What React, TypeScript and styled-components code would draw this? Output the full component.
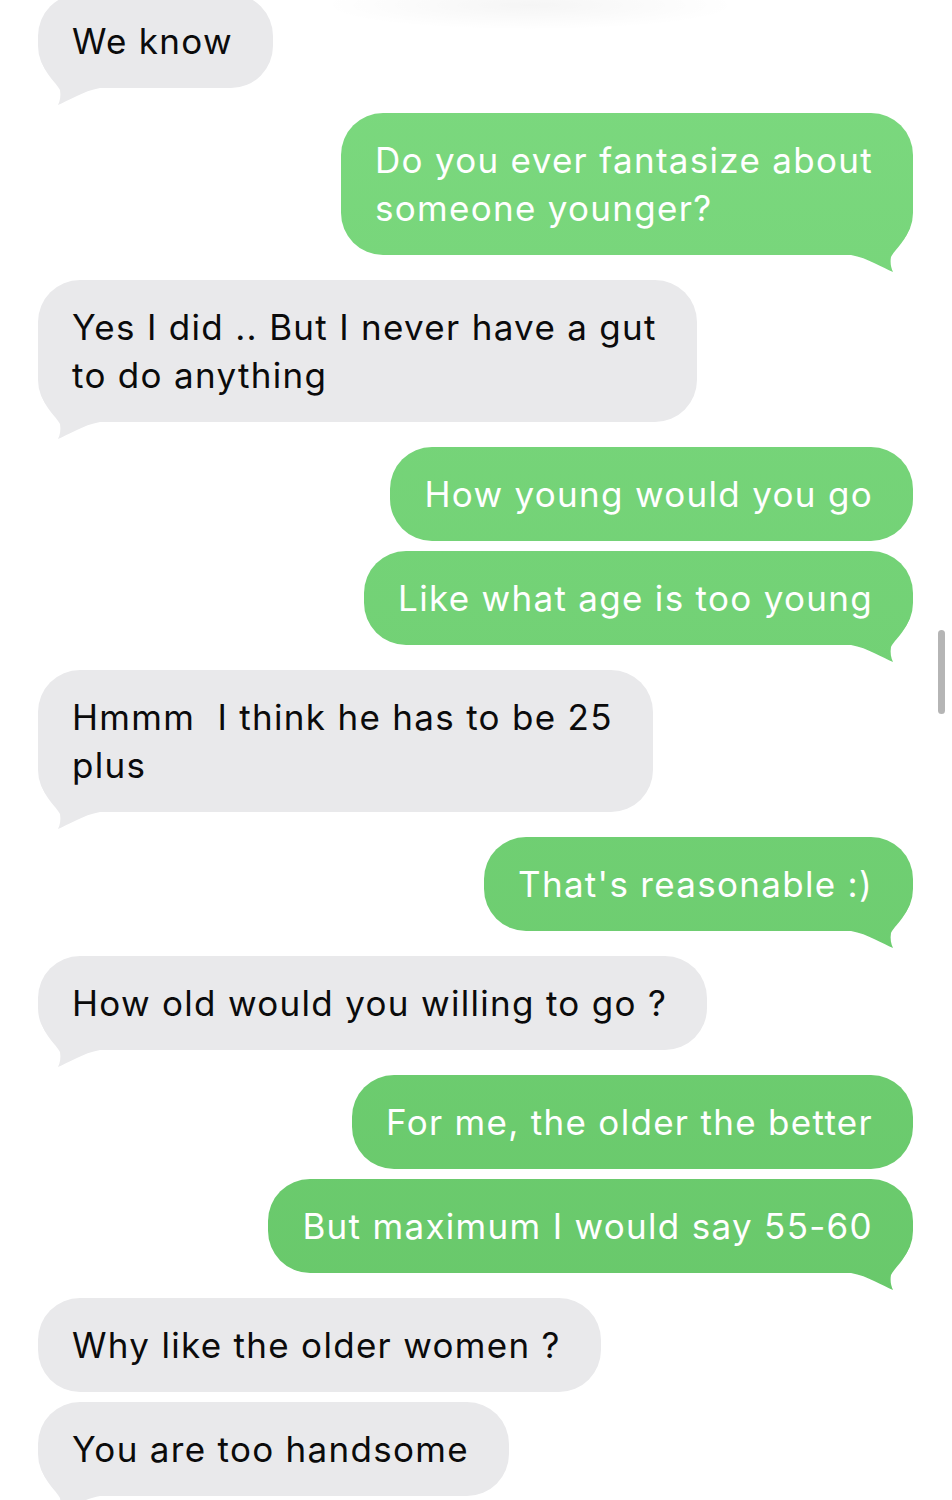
import React from 'react';
import styled, { createGlobalStyle, css } from 'styled-components';

type Side = 'them' | 'me';

interface MessageGroup {
  side: Side;
  texts: string[];
}

// line breaks are kept as they wrap on the phone
const thread: MessageGroup[] = [
  { side: 'them', texts: ['We know'] },
  { side: 'me', texts: ['Do you ever fantasize about\nsomeone younger?'] },
  { side: 'them', texts: ['Yes I did .. But I never have a gut\nto do anything'] },
  { side: 'me', texts: ['How young would you go', 'Like what age is too young'] },
  { side: 'them', texts: ['Hmmm  I think he has to be 25\nplus'] },
  { side: 'me', texts: ["That's reasonable :)"] },
  { side: 'them', texts: ['How old would you willing to go ?'] },
  { side: 'me', texts: ['For me, the older the better', 'But maximum I would say 55-60'] },
  { side: 'them', texts: ['Why like the older women ?', 'You are too handsome'] },
];

const GlobalStyle = createGlobalStyle`
  html, body {
    margin: 0;
    padding: 0;
    background: #ffffff;
  }
  body {
    font-family: Inter, Roboto, 'Liberation Sans', sans-serif;
    -webkit-font-smoothing: antialiased;
    overflow: hidden;
  }
`;

const Screen = styled.div`
  position: relative;
  width: 952px;
  height: 1500px;
  overflow: hidden;
  background: #ffffff;
`;

// faint blur left by the navigation bar above
const TopHaze = styled.div`
  position: absolute;
  top: -20px;
  left: 320px;
  width: 420px;
  height: 50px;
  background: radial-gradient(ellipse at center, rgba(0, 0, 0, 0.04) 0%, rgba(0, 0, 0, 0) 70%);
  pointer-events: none;
`;

const Thread = styled.div`
  display: flex;
  flex-direction: column;
  gap: 25px;
  margin-top: -6px;
  padding: 0 39px 0 38px;
`;

const Group = styled.div<{ $side: Side }>`
  display: flex;
  flex-direction: column;
  gap: 10px;
  align-items: ${(p) => (p.$side === 'me' ? 'flex-end' : 'flex-start')};
`;

const leftTail = "path('M 2 1 C 6 19 18 27 22 35 C 23 41 22 46 20 50 C 30 46 45 36 62 33 L 62 1 Z')";
const rightTail = "path('M 62 1 C 58 19 46 27 42 35 C 41 41 42 46 44 50 C 34 46 19 36 2 33 L 2 1 Z')";

const Bubble = styled.div<{ $side: Side; $tail: boolean }>`
  position: relative;
  isolation: isolate;
  box-sizing: border-box;
  max-width: 760px;
  padding: 23px 40px 23px 34px;
  border-radius: 42px;
  font-size: 35px;
  line-height: 48px;
  letter-spacing: 1.3px;
  white-space: pre-wrap;
  ${(p) =>
    p.$side === 'me'
      ? css`
          color: #ffffff;
          background: linear-gradient(180deg, #7cd97f 0%, #72d175 45%, #66c668 100%);
          background-attachment: fixed;
        `
      : css`
          color: #0b0b0b;
          background: #e9e9eb;
        `}

  ${(p) =>
    p.$tail &&
    css`
      &::after {
        content: '';
        position: absolute;
        z-index: -1;
        bottom: -17px;
        width: 64px;
        height: 50px;
        background: inherit;
        ${p.$side === 'me'
          ? css`
              right: 0;
              clip-path: ${rightTail};
            `
          : css`
              left: 0;
              clip-path: ${leftTail};
            `}
      }
    `}
`;

const ScrollThumb = styled.div`
  position: absolute;
  top: 630px;
  right: 7px;
  width: 7px;
  height: 84px;
  border-radius: 4px;
  background: #b5b5b5;
`;

export default function App() {
  return (
    <Screen>
      <GlobalStyle />
      <Thread>
        {thread.map((group, gi) => (
          <Group key={gi} $side={group.side}>
            {group.texts.map((text, i) => (
              <Bubble key={i} $side={group.side} $tail={i === group.texts.length - 1}>
                {text}
              </Bubble>
            ))}
          </Group>
        ))}
      </Thread>
      <TopHaze />
      <ScrollThumb />
    </Screen>
  );
}
